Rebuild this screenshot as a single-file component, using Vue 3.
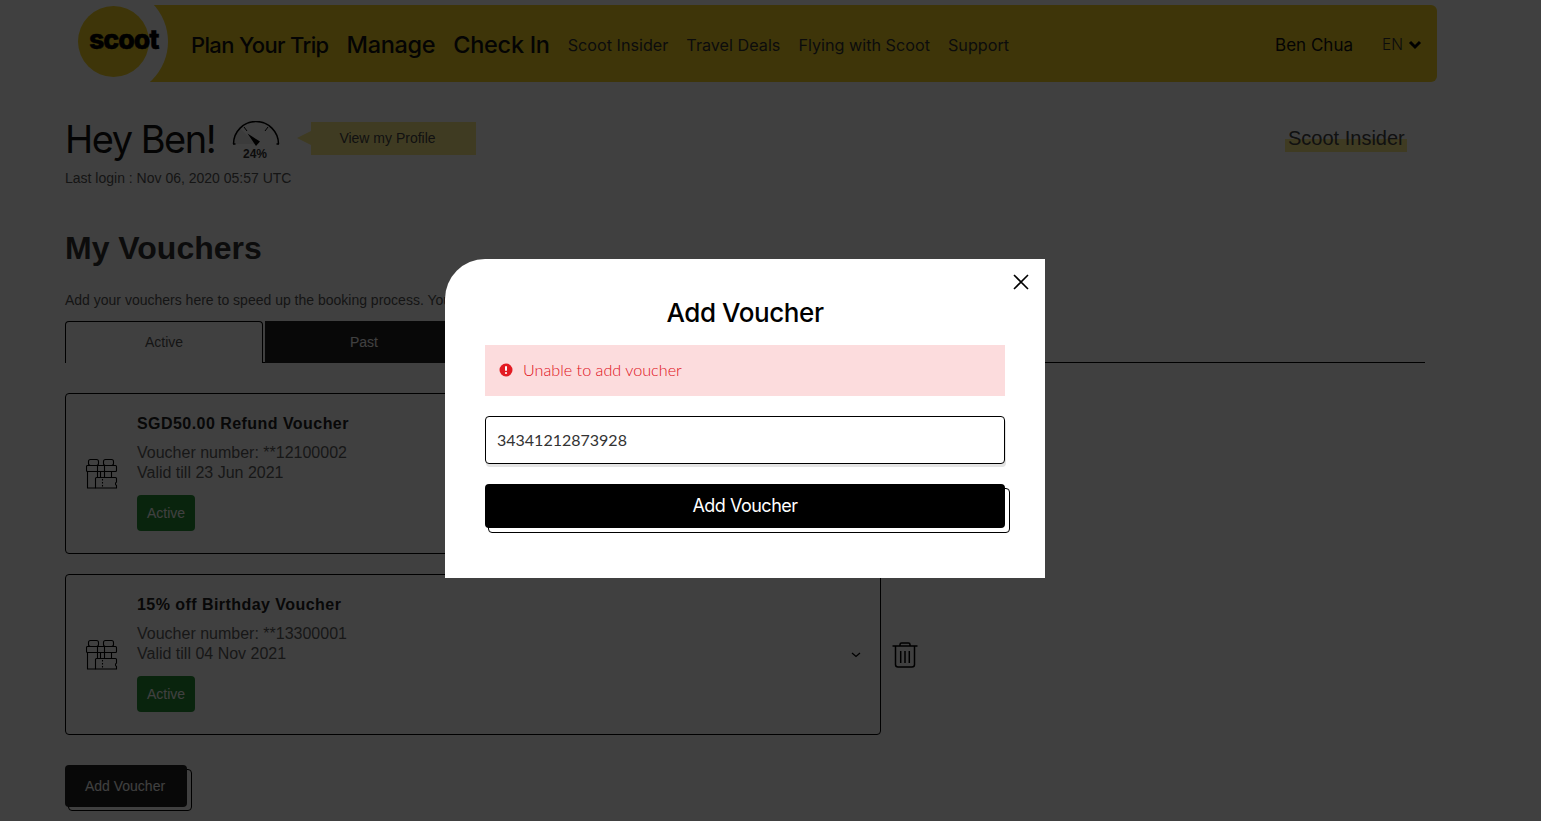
<script setup>
const navMain = ['Plan Your Trip', 'Manage', 'Check In']
const navSub = ['Scoot Insider', 'Travel Deals', 'Flying with Scoot', 'Support']
const vouchers = [
  { title: 'SGD50.00 Refund Voucher', number: '**12100002', valid: '23 Jun 2021' },
  { title: '15% off Birthday Voucher', number: '**13300001', valid: '04 Nov 2021' }
]
</script>

<template>
  <div class="page">
    <header class="nav">
      <div class="logo"><span class="logo-text">scoot</span></div>
      <div class="band">
        <a v-for="item in navMain" :key="item" class="main-link">{{ item }}</a>
        <a v-for="item in navSub" :key="item" class="sub-link">{{ item }}</a>
        <span class="user">Ben Chua</span>
        <span class="lang">EN</span>
        <svg class="lang-chev" width="14" height="10" viewBox="0 0 14 10"><path d="M2 2l5 5 5-5" fill="none" stroke="#000" stroke-width="3"/></svg>
      </div>
    </header>

    <main class="content">
      <section class="hero">
        <div class="hero-left">
          <div class="greet-row">
            <h1 class="greet">Hey Ben!</h1>
            <div class="gauge">
              <svg width="48" height="30" viewBox="0 0 48 30">
                <path d="M1.500 23A22.500 22.500 0 0 1 8 7L24 23Z" fill="#bbb" opacity=".3"/>
                <path d="M1 23h2.500M1.500 23A22.500 22.500 0 0 1 46.500 23M44.500 23H47" fill="none" stroke="#000" stroke-width="1.500"/>
                <path d="M33 10l3-4M12 6l3 4" stroke="#000" stroke-width="1"/>
                <path d="M15.500 12.500L28 20.500 24 25z" fill="#000"/>
              </svg>
              <span class="gauge-text">24%</span>
            </div>
            <div class="callout">View my Profile</div>
          </div>
          <p class="login">Last login : Nov 06, 2020 05:57 UTC</p>
        </div>
        <a class="insider">Scoot Insider</a>
      </section>

      <h2 class="heading">My Vouchers</h2>
      <p class="desc">Add your vouchers here to speed up the booking process. You can apply them at checkout.</p>

      <div class="tabs">
        <div class="tab tab-active">Active</div>
        <div class="tab tab-past">Past</div>
      </div>

      <div class="voucher-list">
        <div v-for="v in vouchers" :key="v.number" class="voucher-row">
          <article class="card">
            <svg class="gift" width="32" height="32" viewBox="0 0 32 32" fill="none" stroke="#000" stroke-width="1.100">
              <rect x="2.500" y="1.500" width="10" height="6" rx="2"/>
              <rect x="17.500" y="1.500" width="10" height="6" rx="2"/>
              <rect x="0.500" y="7.500" width="30" height="6" rx="1"/>
              <path d="M11.500 7.500v6M18.500 7.500v6M1.500 13.500v16.500h8M11.500 13.500v5.500M14.500 13.500v5.500M18.500 13.500v5.500M25.500 13.500v5.500"/>
              <path d="M9.500 30V20.500a1 1 0 0 1 1-1h19a1 1 0 0 1 1 1v3.500a2 2 0 0 0 0 3.500V30h-21z"/>
              <path d="M16.500 21v9" stroke-dasharray="1.500 1.500"/>
            </svg>
            <div class="card-body">
              <h3 class="card-title">{{ v.title }}</h3>
              <p class="card-line">Voucher number: {{ v.number }}</p>
              <p class="card-line">Valid till {{ v.valid }}</p>
              <span class="badge">Active</span>
            </div>
            <svg class="card-chev" width="10" height="6" viewBox="0 0 10 6"><path d="M1 1l4 3.500L9 1" fill="none" stroke="#000" stroke-width="1.300"/></svg>
          </article>
          <svg class="trash" width="26" height="26" viewBox="0 0 26 26" fill="none" stroke="#000" stroke-width="1.500">
            <path d="M0.500 4h25M8 4V2.500a1.500 1.500 0 0 1 1.500-1.500h7A1.500 1.500 0 0 1 18 2.500V4M3.500 4v18.500a2.500 2.500 0 0 0 2.500 2.500h14a2.500 2.500 0 0 0 2.500-2.500V4M8.700 9v12M13 9v12M17.300 9v12"/>
          </svg>
        </div>
      </div>

      <button class="btn-small">Add Voucher</button>
    </main>

    <div class="overlay">
      <div class="modal">
        <svg class="close" width="18" height="18" viewBox="0 0 18 18"><path d="M2 2l14 14M16 2L2 16" stroke="#000" stroke-width="1.600" fill="none"/></svg>
        <h2 class="modal-title">Add Voucher</h2>
        <div class="alert">
          <svg width="14" height="14" viewBox="0 0 14 14">
            <circle cx="7" cy="7" r="6.500" fill="#e31b23"/>
            <rect x="6" y="3" width="2" height="5" rx="1" fill="#fff"/>
            <circle cx="7" cy="10" r="1.100" fill="#fff"/>
          </svg>
          <span>Unable to add voucher</span>
        </div>
        <input class="field" type="text" value="34341212873928" />
        <button class="btn-large">Add Voucher</button>
      </div>
    </div>
  </div>
</template>

<style>
html, body { margin: 0; height: 100%; overflow: hidden; background: #fff; }
</style>

<style scoped>
.page {
  height: 821px;
  overflow: hidden;
  padding-top: 5px;
  box-sizing: border-box;
  font-family: "Liberation Sans", Arial, sans-serif;
  color: #333;
}
p, h1, h2, h3 { margin: 0; }

.nav { display: flex; margin: 0 104px 0 78px; height: 77px; }
.logo {
  position: relative;
  z-index: 1;
  flex: none;
  width: 71px;
  height: 71px;
  margin-top: 1px;
  border-radius: 50%;
  background: #f5d424;
  box-shadow: 0 0 0 19px #fff;
}
.logo-text {
  position: absolute;
  left: 11px;
  top: 16px;
  font: 800 27px/36px Inter, sans-serif;
  letter-spacing: -1.200px;
  color: #000;
  -webkit-text-stroke: .4px #000;
}
.band {
  flex: 1;
  display: flex;
  align-items: center;
  margin-left: -30px;
  padding-left: 72px;
  padding-top: 2px;
  box-sizing: border-box;
  background: #f5d424;
  border-radius: 0 6px 6px 0;
  color: #000;
}
.main-link { font: 500 23.500px/30px Inter, sans-serif; letter-spacing: -.3px; margin-right: 18px; color: #111; }
.main-link:first-child { font-size: 22px; letter-spacing: -.65px; }
.sub-link { font: 400 16.200px/30px Inter, sans-serif; margin-right: 18px; color: #333; }
.user { margin-left: auto; font: 400 17px/30px Inter, sans-serif; color: #111; }
.lang { margin-left: 29px; font: 300 15.500px/30px Inter, sans-serif; color: #333; }
.lang-chev { margin: 0 15px 0 5px; }

.content { position: relative; z-index: 0; margin: 0 116px 0 65px; }
.hero { display: flex; justify-content: space-between; margin-top: 35px; }
.greet-row { display: flex; align-items: flex-start; }
.greet { margin-top: -2px; height: 48px; font: 400 38px/48px Inter, sans-serif; letter-spacing: -1.500px; color: #111; width: 167px; white-space: nowrap; }
.gauge { position: relative; width: 48px; height: 42px; margin-top: 4px; }
.gauge-text { position: absolute; left: -1px; right: 1px; top: 26px; text-align: center; font: 700 12px/14px "Liberation Sans", sans-serif; color: #333; }
.callout {
  position: relative;
  width: 165px;
  height: 33px;
  box-sizing: border-box;
  padding-right: 12px;
  margin: 5px 0 0 31px;
  background: #fcec88;
  font-size: 14px;
  line-height: 33px;
  text-align: center;
  color: #444;
}
.callout::before {
  content: "";
  position: absolute;
  left: -14px;
  top: 9px;
  border-style: solid;
  border-width: 7px 14px 7px 0;
  border-color: transparent #fcec88 transparent transparent;
}
.login { margin-top: 5px; font-size: 14px; line-height: 20px; color: #555; }
.insider {
  align-self: flex-start;
  margin: 8px 18px 0 0;
  padding: 0 3px;
  font-size: 20px;
  line-height: 26px;
  color: #444;
  background: linear-gradient(transparent 53%, #fcec88 53%);
  height: 27px;
  width: 116px;
  white-space: nowrap;
}

.heading { margin-top: 40px; font-size: 32px; line-height: 40px; font-weight: 700; color: #333; }
.desc { margin-top: 22px; font-size: 14px; line-height: 20px; color: #555; white-space: nowrap; }
.tabs { display: flex; gap: 2px; margin-top: 11px; height: 41px; border-bottom: 1px solid #000; }
.tab { position: relative; width: 198px; height: 42px; box-sizing: border-box; text-align: center; font-size: 14px; line-height: 42px; }
.tab-active { border: 1px solid #000; border-bottom: 0; border-radius: 4px 4px 0 0; background: #fff; color: #555; line-height: 40px; }
.tab-past { background: #222; color: #fff; }

.voucher-list { display: flex; flex-direction: column; gap: 20px; margin-top: 30px; }
.voucher-row { display: flex; align-items: center; gap: 11px; }
.card {
  width: 816px;
  height: 161px;
  box-sizing: border-box;
  display: flex;
  align-items: center;
  border: 1px solid #000;
  border-radius: 4px;
  padding: 0 19px 0 20px;
}
.gift { flex: none; }
.card-body { flex: 1; margin-left: 19px; padding-bottom: 2px; }
.card-title { font: 700 16px/20px "Liberation Sans", sans-serif; letter-spacing: .45px; color: #222; }
.card-line { font-size: 16px; line-height: 20px; color: #5e5e5e; }
.card-title + .card-line { margin-top: 9px; }
.badge {
  display: inline-block;
  width: 58px;
  height: 36px;
  margin-top: 12px;
  border-radius: 4px;
  background: #268f36;
  color: #fff;
  font-size: 14px;
  line-height: 36px;
  text-align: center;
}
.card-chev { flex: none; }
.trash { flex: none; }

.btn-small {
  display: block;
  position: relative;
  width: 122px;
  height: 42px;
  margin-top: 30px;
  padding: 0 2px 0 0;
  border: 0;
  border-radius: 4px;
  background: #222;
  color: #fff;
  font: 14px "Liberation Sans", sans-serif;
}
.btn-small::after {
  content: "";
  position: absolute;
  left: 3px;
  top: 4px;
  right: -5px;
  bottom: -4px;
  border: 1px solid #000;
  border-radius: 4px;
  z-index: -1;
}

.overlay {
  position: fixed;
  inset: 0;
  z-index: 5;
  background: rgba(0, 0, 0, .75);
}
.modal {
  position: absolute;
  z-index: 0;
  left: 445px;
  top: 259px;
  width: 600px;
  height: 319px;
  box-sizing: border-box;
  padding: 37px 40px 0;
  background: #fff;
  border-radius: 40px 0 0 0;
  display: flex;
  flex-direction: column;
}
.close { position: absolute; right: 15px; top: 14px; }
.modal-title { font: 500 26px/33px Inter, sans-serif; letter-spacing: -.4px; text-align: center; color: #000; }
.alert {
  display: flex;
  align-items: center;
  gap: 10px;
  height: 51px;
  margin-top: 16px;
  padding-left: 14px;
  padding-bottom: 2px;
  box-sizing: border-box;
  background: #fcdcdd;
  color: #e0101a;
  font: 300 16.200px/20px Lato, sans-serif;
}
.field {
  height: 48px;
  margin-top: 20px;
  padding: 0 11px 2px;
  box-sizing: border-box;
  width: 100%;
  border: 1px solid #000;
  border-radius: 4px;
  box-shadow: 1px 3px 0 #e4e4e4;
  outline: none;
  font: 400 16px Lato, sans-serif;
  color: #333;
}
.btn-large {
  position: relative;
  height: 44px;
  margin-top: 20px;
  padding-bottom: 3px;
  border: 0;
  border-radius: 4px;
  background: #000;
  color: #fff;
  font: 400 18px Inter, sans-serif;
  letter-spacing: -.5px;
}
.btn-large::after {
  content: "";
  position: absolute;
  left: 3px;
  top: 4px;
  right: -5px;
  bottom: -5px;
  border: 1px solid #000;
  border-radius: 4px;
  z-index: -1;
}
</style>
